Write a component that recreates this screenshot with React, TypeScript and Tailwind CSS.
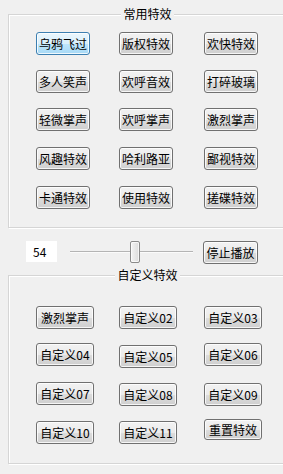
import React from "react";

const font = { fontFamily: '"Noto Sans CJK SC", "Noto Sans", sans-serif' };

function Btn({
  label,
  w,
  focused = false,
  className = "",
}: {
  label: string;
  w: string;
  focused?: boolean;
  className?: string;
}) {
  const base =
    "h-[23px] rounded-[3px] border text-[12px] leading-[14px] text-black flex items-center justify-center shadow-[inset_0_0_0_1px_rgba(255,255,255,0.8)] whitespace-nowrap";
  const skin = focused
    ? "border-[#3c7fb1] bg-[linear-gradient(to_bottom,#eaf6fd_0%,#d9f0fc_50%,#bee6fd_51%,#a7d9f5_100%)]"
    : "border-[#707070] bg-[linear-gradient(to_bottom,#f2f2f2_0%,#ebebeb_50%,#dddddd_51%,#cfcfcf_100%)]";
  return <div className={`${base} ${skin} ${w} ${className}`}>{label}</div>;
}

function Group({
  title,
  height,
  children,
}: {
  title: string;
  height: string;
  children: React.ReactNode;
}) {
  return (
    <div className="ml-[8px] w-[282px]">
      <div className="relative z-10 flex justify-center pr-[3px]">
        <div className="bg-[#f0f0f0] px-[2px] text-[12px] leading-[14px] text-black">{title}</div>
      </div>
      <div
        className={`-mt-[7px] border border-[#d5d5d5] shadow-[inset_1px_1px_0_#ffffff,1px_1px_0_#ffffff] ${height}`}
      >
        {children}
      </div>
    </div>
  );
}

export default function App() {
  const rows1 = [
    ["乌鸦飞过", "版权特效", "欢快特效"],
    ["多人笑声", "欢呼音效", "打碎玻璃"],
    ["轻微掌声", "欢呼掌声", "激烈掌声"],
    ["风趣特效", "哈利路亚", "鄙视特效"],
    ["卡通特效", "使用特效", "搓碟特效"],
  ];
  const rowMt1 = ["mt-[17px]", "mt-[15px]", "mt-[15px]", "mt-[16px]", "mt-[16px]"];

  return (
    <div className="w-[283px] h-[474px] overflow-hidden bg-[#f0f0f0] pt-[7px]" style={font}>
      <Group title="常用特效" height="h-[214px]">
        {rows1.map((r, i) => (
          <div key={i} className={`flex pl-[27px] ${rowMt1[i]}`}>
            <Btn label={r[0]} w="w-[54px]" focused={i === 0} />
            <Btn label={r[1]} w="w-[54px]" className="ml-[29px]" />
            <Btn label={r[2]} w="w-[54px]" className="ml-[31px]" />
          </div>
        ))}
      </Group>

      <div className="mt-[13px] flex h-[23px] items-center">
        <div className="ml-[26px] flex h-[21px] w-[31px] items-center self-start bg-white pl-[7px] text-[12px] leading-[14px] text-black">
          54
        </div>
        <div className="relative ml-[13px] h-[23px] w-[123px]">
          <div className="absolute left-0 right-0 top-[10px] h-[1px] bg-[#b4b4b4]" />
          <div className="absolute left-0 right-0 top-[11px] h-[1px] bg-[#fbfbfb]" />
          <div className="absolute left-[60px] top-0 h-[22px] w-[10px] rounded-[2px] border border-[#8a8a8a] bg-[linear-gradient(to_right,#f4f4f4,#dcdcdc)] shadow-[inset_0_0_0_1px_rgba(255,255,255,0.7)]" />
        </div>
        <Btn label="停止播放" w="w-[55px]" className="ml-[10px]" />
      </div>

      <div className="mt-[4px]">
        <Group title="自定义特效" height="h-[189px]">
          <div className="flex items-start pl-[27px] mt-[30px]">
            <Btn label="激烈掌声" w="w-[58px]" />
            <Btn label="自定义02" w="w-[58px]" className="ml-[25px]" />
            <Btn label="自定义03" w="w-[58px]" className="ml-[27px]" />
          </div>
          <div className="flex items-start pl-[27px] mt-[14px] h-[24px]">
            <Btn label="自定义04" w="w-[58px]" />
            <Btn label="自定义05" w="w-[58px]" className="ml-[25px] mt-[2px]" />
            <Btn label="自定义06" w="w-[58px]" className="ml-[27px]" />
          </div>
          <div className="flex items-start pl-[27px] mt-[15px] h-[24px]">
            <Btn label="自定义07" w="w-[58px]" />
            <Btn label="自定义08" w="w-[58px]" className="ml-[25px] mt-[1px]" />
            <Btn label="自定义09" w="w-[58px]" className="ml-[27px] mt-[1px]" />
          </div>
          <div className="flex items-start pl-[27px] mt-[15px]">
            <Btn label="自定义10" w="w-[58px]" />
            <Btn label="自定义11" w="w-[58px]" className="ml-[25px]" />
            <Btn label="重置特效" w="w-[58px]" className="ml-[27px] -mt-[2px] !h-[21px]" />
          </div>
        </Group>
      </div>
    </div>
  );
}
